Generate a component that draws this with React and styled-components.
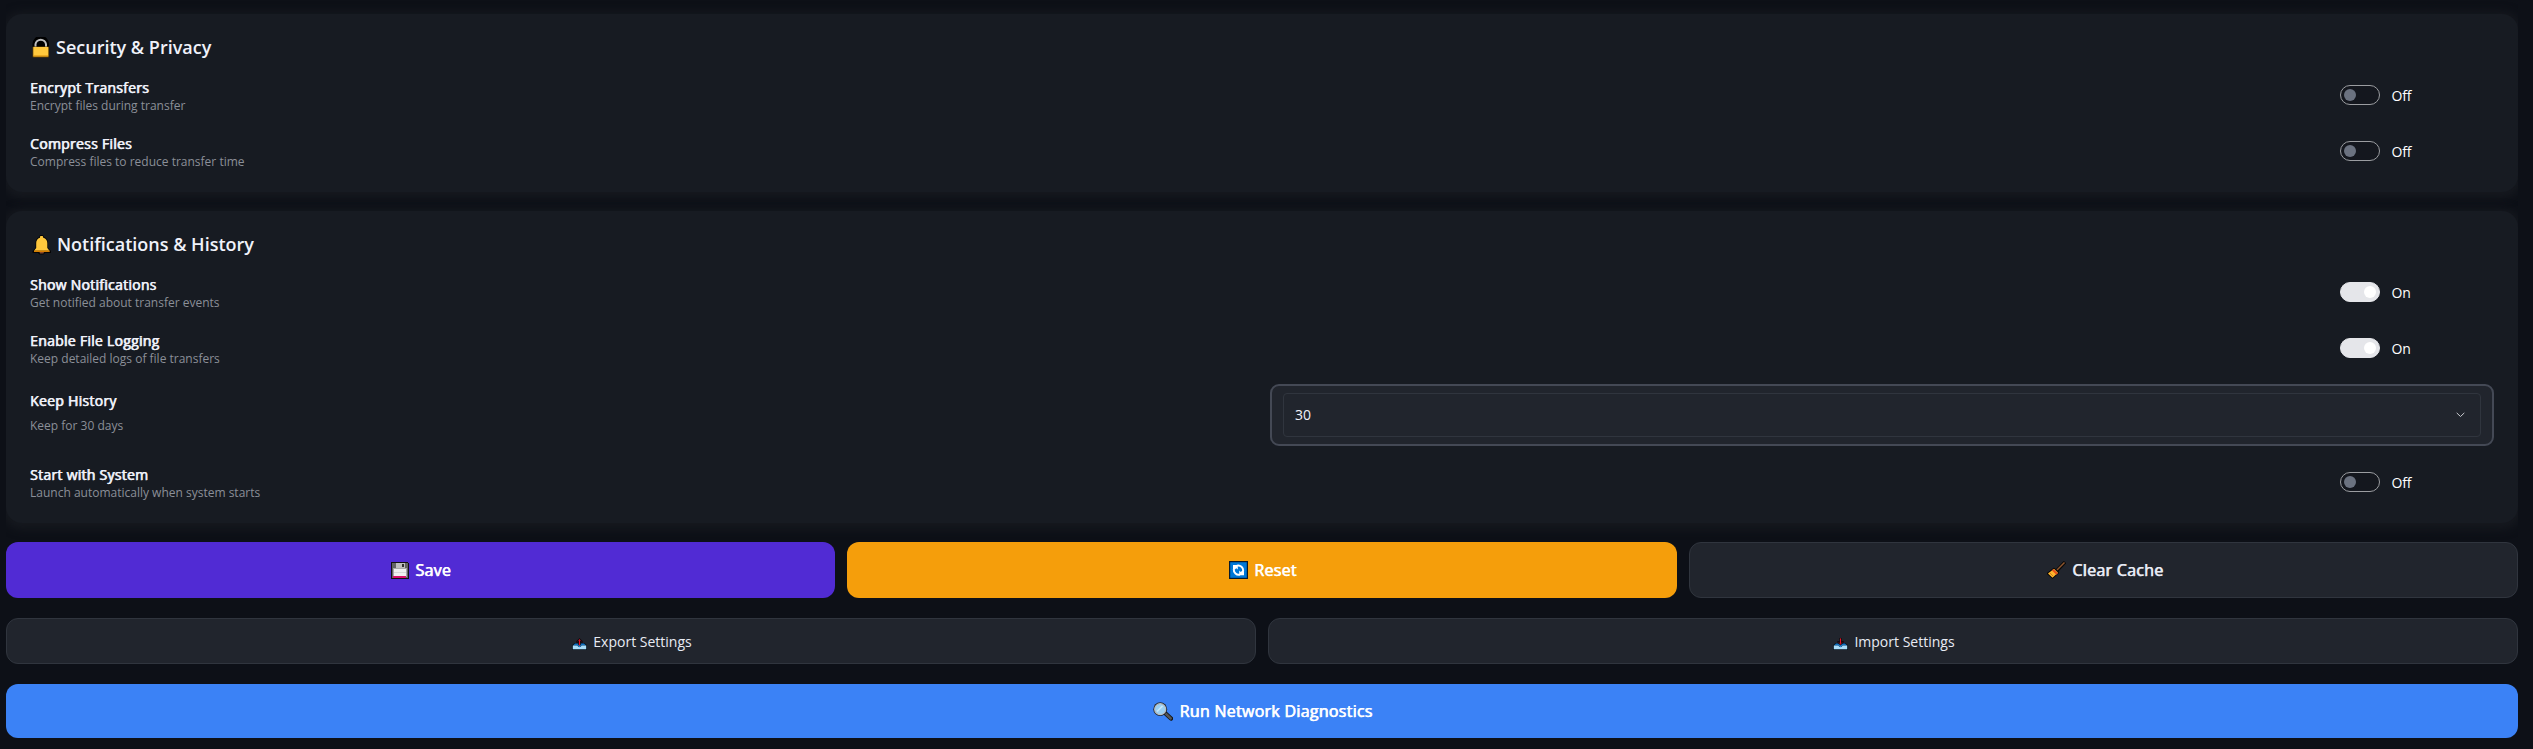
import React, { useState } from "react";
import styled, { createGlobalStyle, css } from "styled-components";

const GlobalStyle = createGlobalStyle`
  *, *::before, *::after { box-sizing: border-box; }
  html, body { height: 100%; }
  body {
    margin: 0;
    background: #0d1017;
    color: #f0f2fa;
    font-family: "Open Sans", "Noto Sans", sans-serif;
    overflow: hidden;
  }
`;

const Page = styled.main`
  height: 749px;
  padding: 14px 15px 0 6px;
  display: flex;
  flex-direction: column;
  overflow: hidden;
`;

const Stack = styled.div`
  display: flex;
  flex-direction: column;
  clip-path: inset(-14px 0 -40px 0);
`;

const Panel = styled.section`
  height: ${(p) => p.$height}px;
  margin-bottom: 19px;
  padding: 0 24px;
  border-radius: 16px;
  background: #171b22;
  box-shadow: 0 2px 10px 4px #16191f;
`;

const PanelTitle = styled.h2`
  display: flex;
  align-items: center;
  height: 61px;
  margin: 0;
  padding: 5px 0 0 2px;
  gap: ${(p) => p.$gap}px;
  font-size: 18px;
  line-height: 24px;
  font-weight: 600;
  white-space: pre;
`;

const Rows = styled.div`
  display: flex;
  flex-direction: column;
  gap: 16px;
`;

const Row = styled.div`
  display: grid;
  grid-template-columns: 1fr ${(p) => (p.$wide ? "1224px" : "154px")};
  height: ${(p) => (p.$wide ? 62 : 40)}px;
`;

const Caption = styled.div`
  display: flex;
  flex-direction: column;
  gap: ${(p) => (p.$spread ? 7 : 0)}px;
  padding-top: ${(p) => (p.$spread ? 7 : 3)}px;
`;

const fauxBold = css`
  letter-spacing: 0.27px;
  -webkit-text-stroke: 0.25px currentColor;
  text-shadow: 0.6px 0 0 currentColor;
`;

const Label = styled.span`
  font-size: 14px;
  line-height: 19px;
  ${fauxBold}
`;

const Hint = styled.span`
  font-size: 12px;
  line-height: 17px;
  color: #8b8f98;
`;

const Switch = styled.button`
  display: flex;
  align-items: center;
  gap: 11.5px;
  height: 40px;
  padding: 0;
  border: 0;
  background: none;
  color: #ffffff;
  font: 14px/20px "Open Sans", "Noto Sans", sans-serif;
`;

const Track = styled.span`
  display: flex;
  align-items: center;
  justify-content: ${(p) => (p.$on ? "flex-end" : "flex-start")};
  width: 40px;
  height: 20px;
  padding: 0 3px;
  border-radius: 10px;
  border: 1px solid ${(p) => (p.$on ? "#e5e6ea" : "#9b9da1")};
  background: ${(p) => (p.$on ? "#e5e6ea" : "#14171e")};
`;

const Knob = styled.span`
  width: 12px;
  height: 12px;
  border-radius: 50%;
  background: ${(p) => (p.$on ? "#ffffff" : "#6b7280")};
`;

const SwitchText = styled.span`
  padding-top: 2px;
  letter-spacing: -0.15px;
`;

const SelectFrame = styled.div`
  height: 62px;
  padding: 7px 11px;
  border: 2px solid #444955;
  border-radius: 9px;
  background: #21252d;
`;

const Select = styled.div`
  display: flex;
  align-items: center;
  justify-content: space-between;
  height: 44px;
  padding: 0 15px 1px 11px;
  border: 1px solid #30353e;
  border-radius: 4px;
  font-size: 14px;
`;

const ButtonRow = styled.div`
  display: grid;
  grid-auto-flow: column;
  grid-auto-columns: minmax(0, 1fr);
  gap: 12px;
  margin-bottom: 20px;
`;

const tones = {
  primary: css`background: #512bd4; color: #ffffff;`,
  warning: css`background: #f59e0b; color: #ffffff;`,
  info: css`background: #3b82f6; color: #ffffff;`,
  neutral: css`background: #21252d; color: #e8ebf4; border: 1px solid #30353e;`,
};

const Button = styled.button`
  display: flex;
  align-items: center;
  justify-content: center;
  gap: 6px;
  height: ${(p) => p.$height}px;
  padding: 0 0 0 ${(p) => p.$shift ?? 2}px;
  border: 0;
  border-radius: 12px;
  font-family: "Open Sans", "Noto Sans", sans-serif;
  font-size: ${(p) => (p.$strong ? 16 : 14)}px;
  ${(p) => p.$strong && fauxBold}
  ${(p) => tones[p.$tone]}
`;

const Icon = styled.svg`
  display: block;
  flex: none;
`;

const LockIcon = () => (
  <Icon width="18" height="21" viewBox="0 0 18 21">
    <path d="M2.5 10V7a6 6 0 0 1 12.500 0v3" fill="#000" stroke="#000" strokeWidth="4" />
    <path d="M3.500 10V7.200a5.300 5.300 0 0 1 10.500 0v3" fill="#000" stroke="#bdbdbd" strokeWidth="2" />
    <rect x="0.500" y="9.500" width="16.500" height="11" rx="1" fill="#5a3d05" />
    <rect x="1.300" y="10" width="15" height="9.500" rx="0.500" fill="#ffc83d" />
    <path d="M1.500 19h14.600" stroke="#d68c08" />
  </Icon>
);

const BellIcon = () => (
  <Icon width="20" height="21" viewBox="0 0 20 21">
    <path d="M8 1h3l1 2c3 1 4 3.500 4 6v5l3 3v2h-6l-1.500 1.600h-4L6 19H0.500v-2l3-3V9c0-2.500 1-5 3.800-6z" fill="#050505" />
    <path d="M7.500 18h4.500l-.6 1.500H8z" fill="#8a4b2d" />
    <path d="M8.300 2h2.400l.6 1.800c2.700.7 4 2.700 4 5.200v5l2.200 2.700H2l2.200-2.700V9c0-2.500 1.300-4.500 3.700-5.200z" fill="#ffc83d" />
    <path d="M2 17.300h15.700" stroke="#d67d00" strokeWidth="1.400" />
  </Icon>
);

const FloppyIcon = () => (
  <Icon width="18" height="17" viewBox="0 0 18 17" shapeRendering="crispEdges">
    <path d="M0 0h16l2 2v15H0z" fill="#111" />
    <path d="M1 1h15l1 1v14H1z" fill="#636363" />
    <path d="M5 1h9v5H5z" fill="#bdbdbd" />
    <path d="M11 2h2v3h-2z" fill="#303030" />
    <path d="M2 6h14v9H2z" fill="#a8a8a8" />
    <path d="M3 7h12v8H3z" fill="#f0f0f0" />
    <path d="M3 10h12" stroke="#d8d8d8" />
    <path d="M2 14h13v2H2z" fill="#d80f68" />
  </Icon>
);

const RefreshIcon = () => (
  <Icon width="19" height="18" viewBox="0 0 19 18">
    <path d="M0 0h19v18H0z" fill="#07192b" />
    <path d="M1.200 1.200h16.600v15.600H1.200z" fill="#0078d7" />
    <path d="M8 4.600a5 5 0 0 1 6.200 5.400M11 13.600a5 5 0 0 1-6.200-5.400" fill="none" stroke="#fff" strokeWidth="2" />
    <path d="M4 4h4.800v4.600L7.300 7.200 5.500 8.800 4 8zM15 14.200h-4.800V9.600l1.500 1.400 1.800-1.600 1.500.8z" fill="#fff" />
  </Icon>
);

const BroomIcon = () => (
  <Icon width="19" height="18" viewBox="0 0 19 18">
    <path d="M18 1L10 9.500" stroke="#080808" strokeWidth="3.400" />
    <path d="M0 12.500l7-5.500 5 4.500-6.500 6z" fill="#080808" stroke="#080808" />
    <path d="M17.500 1.500L10 9" stroke="#8e562e" strokeWidth="1.500" />
    <path d="M1 12.600l6-4.800 4 4-5.500 5z" fill="#ffb52b" />
    <path d="M5.600 8.800l4.600 4.300" stroke="#e8501d" strokeWidth="2" />
    <path d="M3 12l3 3" stroke="#b96a14" strokeWidth=".7" />
  </Icon>
);

const TrayIcon = ({ up }) => (
  <Icon width="15" height="12" viewBox="0 0 15 12">
    <path d="M2.500 5h10L15 7.300V12H0V7.300z" fill="#07111a" />
    <path d="M3 5.500h9l2 2H1z" fill="#1173c4" />
    <path d="M.8 7.500h4.600l.9 1.300h2.400l.9-1.300h4.600v3.700H.8z" fill="#a9dcf8" />
    <path d="M5.400 7.300h4.200L7.500 9.600z" fill="#2f8fe0" />
    {up ? (
      <>
        <path d="M7.500 0l3.200 3.200v1.600h-2v2.400H6.300V4.800h-2V3.200z" fill="#12090d" />
        <path d="M7.500 1.400v5.800" stroke="#e81224" strokeWidth="1.100" />
        <path d="M5.900 3.300l1.600-1.700 1.600 1.700" fill="none" stroke="#9a1020" strokeWidth=".8" />
      </>
    ) : (
      <>
        <path d="M6.300 0h2.400v3h2v1.600L7.500 7.500 4.300 4.600V3h2z" fill="#12090d" />
        <path d="M7.500 .4v6" stroke="#e81224" strokeWidth="1.100" />
        <path d="M5.900 4.500l1.600 1.700 1.600-1.700" fill="none" stroke="#9a1020" strokeWidth=".8" />
      </>
    )}
  </Icon>
);

const LensIcon = () => (
  <Icon width="20" height="19" viewBox="0 0 20 19">
    <path d="M12 11l6 5.500" stroke="#151515" strokeWidth="4.400" strokeLinecap="round" />
    <path d="M13 12l4.800 4.500" stroke="#555" strokeWidth="2.400" strokeLinecap="round" />
    <circle cx="7.200" cy="7.200" r="6.900" fill="#20262c" />
    <circle cx="7.200" cy="7.200" r="5.500" fill="#9bcff2" stroke="#b9bec2" strokeWidth="1.200" />
    <path d="M4 9.500L9.500 4" stroke="#c9e8fb" strokeWidth="1.600" />
  </Icon>
);

const Chevron = () => (
  <Icon width="9" height="6" viewBox="0 0 9 6" fill="none" stroke="#c9cbd0">
    <path d="M.7 .9l3.800 3.600L8.300 .9" />
  </Icon>
);

const LoweredIcon = styled.span`
  display: block;
  padding-top: 5px;
`;

function ToggleRow({ label, hint, initial = false }) {
  const [on, setOn] = useState(initial);
  return (
    <Row>
      <Caption>
        <Label>{label}</Label>
        <Hint>{hint}</Hint>
      </Caption>
      <Switch role="switch" aria-checked={on} onClick={() => setOn(!on)}>
        <Track $on={on}><Knob $on={on} /></Track>
        <SwitchText>{on ? "On" : "Off"}</SwitchText>
      </Switch>
    </Row>
  );
}

export default function App() {
  return (
    <>
      <GlobalStyle />
      <Page>
        <Stack>
          <Panel $height={178}>
            <PanelTitle $gap={6}><LockIcon />Security &amp; Privacy</PanelTitle>
            <Rows>
              <ToggleRow label="Encrypt Transfers" hint="Encrypt files during transfer" />
              <ToggleRow label="Compress Files" hint="Compress files to reduce transfer time" />
            </Rows>
          </Panel>
          <Panel $height={312}>
            <PanelTitle $gap={5}><BellIcon />Notifications &amp; History</PanelTitle>
            <Rows>
              <ToggleRow label="Show Notifications" hint="Get notified about transfer events" initial />
              <ToggleRow label="Enable File Logging" hint="Keep detailed logs of file transfers" initial />
              <Row $wide>
                <Caption $spread>
                  <Label>Keep History</Label>
                  <Hint>Keep for 30 days</Hint>
                </Caption>
                <SelectFrame>
                  <Select>30<Chevron /></Select>
                </SelectFrame>
              </Row>
              <ToggleRow label="Start with System" hint="Launch automatically when system starts" />
            </Rows>
          </Panel>
        </Stack>
        <ButtonRow>
          <Button $height={56} $tone="primary" $strong $shift={1}><FloppyIcon />Save</Button>
          <Button $height={56} $tone="warning" $strong><RefreshIcon />Reset</Button>
          <Button $height={56} $tone="neutral" $strong $shift={4}><BroomIcon />Clear Cache</Button>
        </ButtonRow>
        <ButtonRow>
          <Button $height={46} $tone="neutral"><LoweredIcon><TrayIcon up /></LoweredIcon>Export Settings</Button>
          <Button $height={46} $tone="neutral"><LoweredIcon><TrayIcon /></LoweredIcon>Import Settings</Button>
        </ButtonRow>
        <ButtonRow>
          <Button $height={54} $tone="info" $strong><LensIcon />Run Network Diagnostics</Button>
        </ButtonRow>
      </Page>
    </>
  );
}
